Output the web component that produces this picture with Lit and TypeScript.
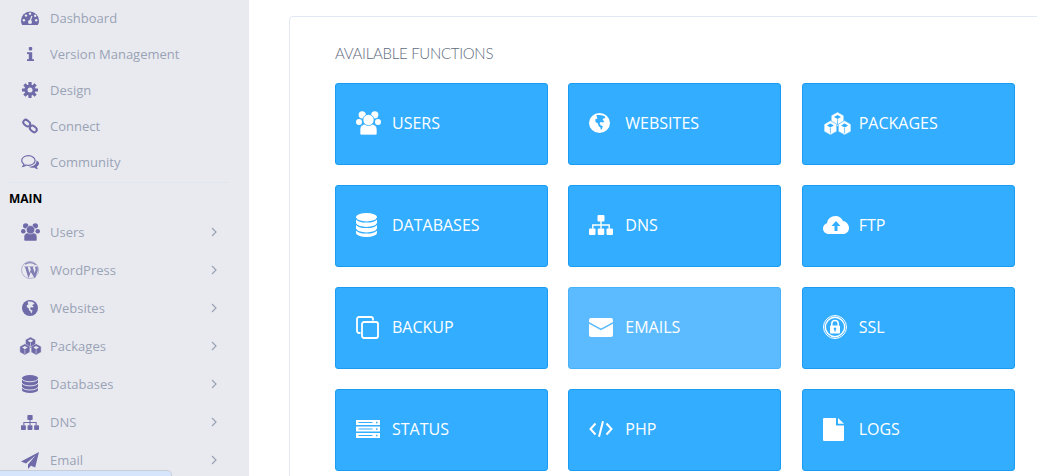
import { LitElement, html, svg, css } from "lit";
import { customElement } from "lit/decorators.js";

const cube = (cx: number, cy: number, s: number) => {
  const d = s * 0.88;
  return svg`
    <path d="M${cx} ${cy - s}L${cx + d} ${cy - s / 2}V${cy + s / 2}L${cx} ${cy + s}L${cx - d} ${cy + s / 2}V${cy - s / 2}Z" fill="currentColor" stroke="var(--ibg)" stroke-width=".6"/>
    <path d="M${cx} ${cy - s * 0.6}L${cx + d * 0.55} ${cy - s * 0.32}L${cx} ${cy - s * 0.04}L${cx - d * 0.55} ${cy - s * 0.32}Z" fill="var(--ibg)"/>
    <path d="M${cx} ${cy + s * 0.02}V${cy + s * 0.8}" stroke="var(--ibg)" stroke-width=".7"/>`;
};

const shapes: Record<string, { vw: number; vh: number; body: unknown }> = {
  users: {
    vw: 25, vh: 24,
    body: svg`
      <circle cx="6.2" cy="3.8" r="3.6" fill="currentColor"/>
      <circle cx="18.8" cy="3.8" r="3.6" fill="currentColor"/>
      <circle cx="3" cy="11" r="3" fill="currentColor"/>
      <circle cx="22" cy="11" r="3" fill="currentColor"/>
      <path d="M5.5 24a1.5 1.5 0 0 1-1.5-1.5V18a6 5 0 0 1 6-5h5a6 5 0 0 1 6 5v4.500a1.500 1.500 0 0 1-1.500 1.500Z" fill="currentColor" stroke="var(--ibg)" stroke-width=".7"/>
      <circle cx="12.5" cy="9" r="5.6" fill="currentColor" stroke="var(--ibg)" stroke-width=".8"/>`,
  },
  dashboard: {
    vw: 18, vh: 14,
    body: svg`
      <path d="M0 9.500a9 9 0 0 1 18 0c0 1.800-.4 3.400-1.200 4.500H1.200C.4 12.900 0 11.300 0 9.500Z" fill="currentColor"/>
      <g fill="var(--ibg)">
        <circle cx="2.900" cy="9.300" r="1.200"/><circle cx="5" cy="4.600" r="1.200"/>
        <circle cx="9" cy="2.800" r="1.200"/><circle cx="14.200" cy="4.800" r="1.200"/><circle cx="15.200" cy="9.300" r="1.200"/>
        <circle cx="9" cy="11" r="2"/>
      </g>
      <path d="M8.700 11l2.200-6" stroke="var(--ibg)" stroke-width="1.200"/>`,
  },
  info: {
    vw: 7, vh: 14,
    body: svg`<rect x="1.800" y="0" width="3.400" height="3.400" rx=".8" fill="currentColor"/>
      <path d="M0 5.200h5.200v7h1.800V14H0v-1.800h1.800V7H0Z" fill="currentColor"/>`,
  },
  cog: {
    vw: 16, vh: 16,
    body: svg`
      <g fill="currentColor">
        ${[0, 45, 90, 135, 180, 225, 270, 315].map(
          (a) => svg`<rect x="6.400" y="0" width="3.200" height="4" rx=".4" transform="rotate(${a} 8 8)"/>`
        )}
        <circle cx="8" cy="8" r="5.600"/>
      </g>
      <circle cx="8" cy="8" r="2.500" fill="var(--ibg)"/>`,
  },
  link: {
    vw: 16, vh: 16,
    body: svg`
      <g fill="none" stroke="currentColor" stroke-width="2">
        <rect x="1" y="2.600" width="7.400" height="5" rx="2.500" transform="rotate(42 4.700 5.100)"/>
        <rect x="7.600" y="8.400" width="7.400" height="5" rx="2.500" transform="rotate(42 11.300 10.900)"/>
      </g>`,
  },
  comments: {
    vw: 18, vh: 15,
    body: svg`
      <path d="M7.400.7C3.600.7.7 2.900.7 5.600c0 1.500.9 2.800 2.300 3.700-.2.8-.6 1.400-1.100 2 1.200-.2 2.300-.7 3.200-1.300.7.2 1.500.3 2.300.3 3.800 0 6.700-2.200 6.700-4.700S11.200.7 7.400.7Z" fill="none" stroke="currentColor" stroke-width="1.200"/>
      <path d="M15.300 5.400c1.700.6 2.700 1.700 2.700 3 0 1.300-.9 2.400-2.200 3 .2 1 .7 2 1.400 2.900-1.500-.2-3-.9-4-1.800-.7.1-1.200.2-1.900.2-1.300 0-2.600-.3-3.600-.9 3.600-.2 6.500-1.600 7.400-3.800.4-.8.4-1.700.2-2.600Z" fill="currentColor"/>`,
  },
  wordpress: {
    vw: 18, vh: 18,
    body: svg`
      <circle cx="9" cy="9" r="8.500" fill="none" stroke="currentColor" stroke-width=".8" opacity=".55"/>
      <path d="M3.300 5.400h4.300v.7l-.9.1 1.900 5.700 1.200-3.500-.7-2.200-.8-.1v-.7h4.400v.7l-.9.1 1.900 5.700.7-2.500c.5-1.600-.1-2.600-.5-3.200.6-.9 1.800-.9 2.300-.4.7.9.9 2.700.3 4.400l-2.400 6.900h-.6L9.800 11l-2 5.600h-.6L4.100 6.200 3.300 6.100Z" fill="currentColor" opacity=".85"/>
      <path d="M4 3.300A8 8 0 0 1 14.600 3.800" fill="none" stroke="currentColor" stroke-width="1.200" opacity=".8"/>`,
  },
  globe: {
    vw: 20, vh: 20,
    body: svg`
      <circle cx="10" cy="10" r="10" fill="currentColor"/>
      <path d="M7 2.300c2-.7 5-.5 7.300.7 1.300.8 1.500 1.500.8 2.300l-1.700.3-.4 1.600 1.700.8-1.200 1.500-2.400-.4-1 1.200 1.100 2.100 1.900.5-.7 2.800-1.100 1.200-.4-2.500-1.800-1.400-.6-2.500-2.100-1.300L5.800 6.500l2.200-.9Z" fill="var(--ibg)"/>`,
  },
  cubes: {
    vw: 29, vh: 23,
    body: svg`${cube(14.5, 7.2, 7.2)}${cube(7.4, 15.8, 7.2)}${cube(21.6, 15.8, 7.2)}`,
  },
  database: {
    vw: 21, vh: 24,
    body: svg`
      <path d="M0 4a10.500 4 0 0 1 21 0V20a10.500 4 0 0 1-21 0Z" fill="currentColor"/>
      <g fill="none" stroke="var(--ibg)" stroke-width="1.200">
        <path d="M0 5a10.500 4 0 0 0 21 0"/>
        <path d="M0 10.500a10.500 4 0 0 0 21 0"/>
        <path d="M0 16a10.500 4 0 0 0 21 0"/>
      </g>`,
  },
  sitemap: {
    vw: 24, vh: 20,
    body: svg`
      <g fill="currentColor">
        <rect x="8.500" y="0" width="7" height="6.500" rx="1"/>
        <rect x="0" y="13.500" width="6.500" height="6.500" rx="1"/>
        <rect x="8.750" y="13.500" width="6.500" height="6.500" rx="1"/>
        <rect x="17.500" y="13.500" width="6.500" height="6.500" rx="1"/>
        <path d="M11.300 6h1.400v3.300h8.200v4.500h-1.400v-3.100h-6.800v3.100h-1.400v-3.100H4.500v3.100H3.100V9.300h8.200Z"/>
      </g>`,
  },
  plane: {
    vw: 18, vh: 17,
    body: svg`<path d="M18 0 0 9.600l5 2L14.500 3.500 7 12.600V17l3-3.200 4.200 1.700Z" fill="currentColor"/>`,
  },
  cloud: {
    vw: 26, vh: 18,
    body: svg`
      <path d="M6 18c-3.500 0-6-2.500-6-5.500C0 10 1.500 8 4 7.200 4.500 3 8 0 12.500 0c3.500 0 6.500 2 7.500 5 3.500.5 6 3.500 6 7s-2.500 6-6 6Z" fill="currentColor"/>
      <path d="M13 5 8.500 10h3v5h3v-5h3Z" fill="var(--ibg)"/>`,
  },
  copy: {
    vw: 23, vh: 23,
    body: svg`
      <g fill="none" stroke="currentColor" stroke-width="1.800">
        <path d="M4.500 17H3a2 2 0 0 1-2-2V3a2 2 0 0 1 2-2h12a2 2 0 0 1 2 2v1.500"/>
        <rect x="6" y="6" width="16" height="16" rx="2"/>
      </g>`,
  },
  envelope: {
    vw: 24, vh: 19,
    body: svg`
      <rect width="24" height="19" rx="2" fill="currentColor"/>
      <path d="M-.5 4.500 12 11.500 24.500 4.500" fill="none" stroke="var(--ibg)" stroke-width="1.500"/>`,
  },
  server: {
    vw: 24, vh: 18,
    body: svg`
      ${[0, 6.5, 13].map(
        (y) => svg`<rect y="${y}" width="24" height="5" fill="currentColor"/>
          <rect x="2.500" y="${y + 2}" width="14" height="1" fill="var(--ibg)"/>
          <rect x="20" y="${y + 1.8}" width="1.500" height="1.500" fill="var(--ibg)"/>`
      )}`,
  },
  code: {
    vw: 24, vh: 16,
    body: svg`
      <g fill="none" stroke="currentColor" stroke-width="2">
        <path d="M6.500 2.500 1.500 8l5 5.500"/><path d="M17.500 2.500l5 5.500-5 5.500"/><path d="M14 .3 10 15.700"/>
      </g>`,
  },
  ssl: {
    vw: 24, vh: 24,
    body: svg`
      <circle cx="12" cy="12" r="11.500" fill="none" stroke="currentColor" stroke-width="1"/>
      <circle cx="12" cy="12" r="9.700" fill="none" stroke="currentColor" stroke-width="1.400"/>
      <path d="M8.800 11V8.800a3.200 3.200 0 0 1 6.400 0V11" fill="none" stroke="currentColor" stroke-width="1.500"/>
      <rect x="7" y="10.500" width="10" height="8" rx="1" fill="currentColor"/>
      <circle cx="12" cy="13.800" r="1.300" fill="var(--ibg)"/>
      <rect x="11.400" y="14" width="1.200" height="2.600" fill="var(--ibg)"/>`,
  },
  file: {
    vw: 21, vh: 23,
    body: svg`
      <path d="M1 0H13V7.500H21V22a1 1 0 0 1-1 1H1a1 1 0 0 1-1-1V1a1 1 0 0 1 1-1Z" fill="currentColor"/>
      <path d="M15 0 21 5.800H15Z" fill="currentColor"/>`,
  },
};

const icon = (name: string, w: number, h: number) => {
  const s = shapes[name];
  return html`<svg width=${w} height=${h} viewBox="0 0 ${s.vw} ${s.vh}" preserveAspectRatio="none" aria-hidden="true">${s.body}</svg>`;
};

const chevron = html`<svg class="chev" width="6" height="10" viewBox="0 0 6 10" aria-hidden="true"><path d="M1 1l4 4-4 4" fill="none" stroke="currentColor" stroke-width="1.200"/></svg>`;

const topItems: [string, string, number, number][] = [
  ["Dashboard", "dashboard", 18, 14],
  ["Version Management", "info", 7, 14],
  ["Design", "cog", 16, 16],
  ["Connect", "link", 16, 16],
  ["Community", "comments", 18, 15],
];
const mainItems: [string, string, number, number][] = [
  ["Users", "users", 19, 18],
  ["WordPress", "wordpress", 18, 18],
  ["Websites", "globe", 16, 16],
  ["Packages", "cubes", 23, 18],
  ["Databases", "database", 16, 18],
  ["DNS", "sitemap", 18, 15],
  ["Email", "plane", 18, 17],
];
const tiles: [string, string, number, number, boolean?][] = [
  ["USERS", "users", 25, 24],
  ["WEBSITES", "globe", 21, 20],
  ["PACKAGES", "cubes", 29, 23],
  ["DATABASES", "database", 21, 24],
  ["DNS", "sitemap", 24, 20],
  ["FTP", "cloud", 26, 18],
  ["BACKUP", "copy", 23, 23],
  ["EMAILS", "envelope", 24, 19, true],
  ["SSL", "ssl", 24, 24],
  ["STATUS", "server", 24, 18],
  ["PHP", "code", 24, 16],
  ["LOGS", "file", 21, 23],
];

@customElement("app-root")
export class AppRoot extends LitElement {
  static styles = css`
    :host {
      display: flex;
      width: 1037px;
      height: 476px;
      overflow: hidden;
      background: #fff;
      font-family: "Open Sans", sans-serif;
    }
    .sidebar {
      --ibg: #e9eaf0;
      position: relative;
      flex: 0 0 249px;
      height: 476px;
      overflow: hidden;
      box-sizing: border-box;
      background: #e9eaf0;
      padding: 0 20px 0 9px;
    }
    .item {
      display: flex;
      align-items: center;
      height: 36px;
      font-size: 13px;
      color: #99a3b5;
    }
    .main-list .item {
      height: 38px;
    }
    .slot {
      flex: 0 0 42px;
      display: flex;
      justify-content: center;
      align-items: center;
      margin-right: -1px;
      color: #6f6ba9;
    }
    .slot svg {
      display: block;
    }
    .label {
      flex: 1;
    }
    .chev {
      color: #99a3b5;
      margin-right: 12px;
    }
    hr {
      border: 0;
      border-top: 1px solid #e0e7f1;
      margin: 2px 0 0;
    }
    .section {
      height: 30px;
      display: flex;
      align-items: center;
      font-size: 12px;
      font-weight: 700;
      color: #000;
    }
    .popup {
      position: absolute;
      left: 0;
      bottom: -10px;
      width: 172px;
      height: 16px;
      box-sizing: border-box;
      background: #d6e5fb;
      border: 1px solid #c9cdd6;
      border-left: 0;
      border-radius: 0 5px 0 0;
    }
    .content {
      flex: 1;
      min-width: 0;
      padding: 16px 0 0 40px;
    }
    .card {
      box-sizing: border-box;
      width: 790px;
      height: 520px;
      border: 1px solid #e1e9f4;
      border-radius: 4px;
      padding: 26px 0 0 45px;
      background: #fff;
    }
    h2 {
      margin: 0;
      height: 40px;
      font-family: Lato, sans-serif;
      font-weight: 300;
      font-size: 15px;
      letter-spacing: -0.3px;
      line-height: 20px;
      color: #5f6b7d;
    }
    .grid {
      display: grid;
      grid-template-columns: repeat(3, 213px);
      grid-auto-rows: 82px;
      gap: 20px 20.33px;
    }
    .tile {
      --ibg: #33adff;
      display: flex;
      align-items: center;
      box-sizing: border-box;
      padding: 0 0 2px 20px;
      background: #33adff;
      border: 1px solid #1a9cf2;
      border-radius: 3px;
      color: #fff;
      font-size: 16px;
    }
    .tile.soft {
      --ibg: #5cbbff;
      background: #5cbbff;
      border-color: #48b1fb;
    }
    .tile-icon {
      flex: 0 0 36px;
      display: flex;
      align-items: center;
    }
    .tile-icon svg {
      display: block;
    }
  `;

  render() {
    const row = (it: [string, string, number, number], more: boolean) => html`
      <div class="item">
        <div class="slot">${icon(it[1], it[2], it[3])}</div>
        <div class="label">${it[0]}</div>
        ${more ? chevron : ""}
      </div>`;
    return html`
      <nav class="sidebar">
        <div>${topItems.map((i) => row(i, false))}</div>
        <hr />
        <div class="section">MAIN</div>
        <div class="main-list">${mainItems.map((i) => row(i, true))}</div>
        <div class="popup"></div>
      </nav>
      <main class="content">
        <section class="card">
          <h2>AVAILABLE FUNCTIONS</h2>
          <div class="grid">
            ${tiles.map(
              (t) => html`<div class="tile ${t[4] ? "soft" : ""}">
                <div class="tile-icon">${icon(t[1], t[2], t[3])}</div>
                <span>${t[0]}</span>
              </div>`
            )}
          </div>
        </section>
      </main>
    `;
  }
}
